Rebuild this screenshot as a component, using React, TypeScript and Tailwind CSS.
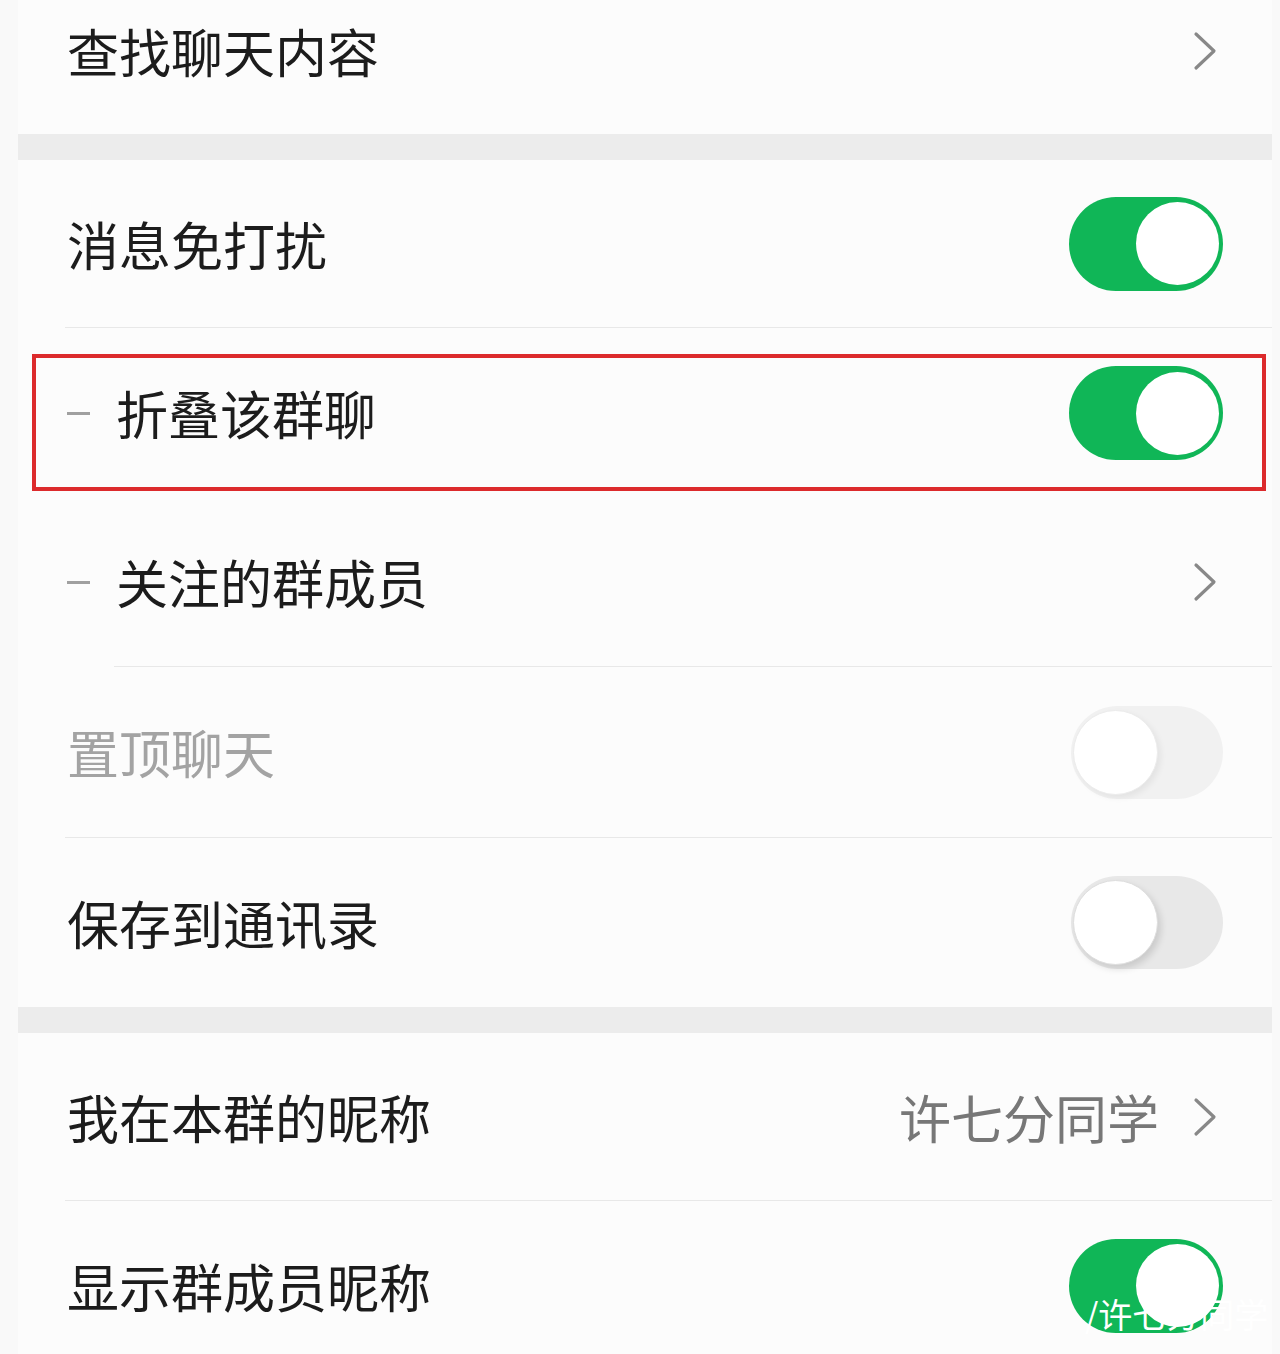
import React from 'react';

const font = { fontFamily: '"Noto Sans CJK SC", "Noto Sans", sans-serif' };

function Chevron() {
  return (
    <svg width="24" height="40" viewBox="0 0 24 40" fill="none" className="shrink-0">
      <path d="M3 3 L21 20 L3 37" stroke="#888888" strokeWidth="3.2" strokeLinecap="round" strokeLinejoin="round" />
    </svg>
  );
}

function Toggle({ on, faded }: { on: boolean; faded?: boolean }) {
  if (on) {
    return (
      <div className="w-[154px] h-[94px] rounded-full bg-[#10b657] flex items-center justify-end pr-[4px] shrink-0">
        <div className="w-[83px] h-[83px] rounded-full bg-white" />
      </div>
    );
  }
  return (
    <div
      className={
        faded
          ? 'w-[152px] h-[93px] rounded-full bg-[#f1f1f1] flex items-center pl-[2px] shrink-0'
          : 'w-[152px] h-[93px] rounded-full bg-[#e8e8e8] flex items-center pl-[2px] shrink-0'
      }
    >
      <div
        className={
          faded
            ? 'w-[85px] h-[85px] rounded-full bg-white border border-[#ececec] shadow-[3px_3px_6px_rgba(0,0,0,0.06)]'
            : 'w-[85px] h-[85px] rounded-full bg-white border border-[#dedede] shadow-[3px_4px_7px_rgba(0,0,0,0.13)]'
        }
      />
    </div>
  );
}

function Row({
  label,
  sub,
  muted,
  right,
  divider,
  height = 'h-[169px]',
}: {
  label: string;
  sub?: boolean;
  muted?: boolean;
  right: React.ReactNode;
  divider?: boolean;
  height?: string;
}) {
  return (
    <div className={`flex pl-[47px] ${height}`}>
      {sub && (
        <div className="w-[49px] flex items-center">
          <div className="w-[23px] h-[3px] bg-[#a0a0a0] ml-[2px]" />
        </div>
      )}
      <div
        className={
          divider
            ? 'flex-1 flex items-center justify-between border-b border-[#e8e8e8] pr-[49px]'
            : 'flex-1 flex items-center justify-between pr-[49px]'
        }
      >
        <span className={muted ? 'text-[52px] text-[#a3a3a3] pl-[2px] leading-none' : 'text-[52px] text-[#1c1c1c] pl-[2px] leading-none'}>
          {label}
        </span>
        {right}
      </div>
    </div>
  );
}

export default function App() {
  return (
    <div className="h-[1354px] overflow-hidden bg-[#f9f9f9]" style={font}>
      <div className="ml-[18px] w-[1254px] bg-[#fcfcfc] min-h-full">
        {/* top row, cut off by the screenshot */}
        <div className="flex items-center justify-between pl-[47px] pr-[55px] h-[134px] pb-[32px]">
          <span className="text-[52px] text-[#1c1c1c] pl-[2px] leading-none">查找聊天内容</span>
          <Chevron />
        </div>

        <div className="h-[26px] bg-[#ececec]" />

        <Row label="消息免打扰" right={<Toggle on />} divider height="h-[168px]" />

        <div className="relative">
          <Row label="折叠该群聊" sub right={<Toggle on />} height="h-[170px]" />
          <div className="absolute left-[14px] right-[6px] top-[26px] bottom-[7px] border-[4px] border-[#dc2a2c] pointer-events-none" />
        </div>

        <Row label="关注的群成员" sub right={<div className="pr-[6px]"><Chevron /></div>} divider />
        <Row label="置顶聊天" muted right={<Toggle on={false} faded />} divider height="h-[171px]" />
        <Row label="保存到通讯录" right={<Toggle on={false} />} />

        <div className="h-[26px] bg-[#ececec]" />

        <Row
          label="我在本群的昵称"
          right={
            <div className="flex items-center gap-[34px] pr-[6px]">
              <span className="text-[52px] text-[#777777] leading-none">许七分同学</span>
              <Chevron />
            </div>
          }
          divider
          height="h-[168px]"
        />

        <div className="relative">
          <Row label="显示群成员昵称" right={<Toggle on />} />
          <span className="absolute left-[1067px] top-[96px] text-[34px] text-white leading-none whitespace-nowrap">
            /许七分同学
          </span>
        </div>
      </div>
    </div>
  );
}
